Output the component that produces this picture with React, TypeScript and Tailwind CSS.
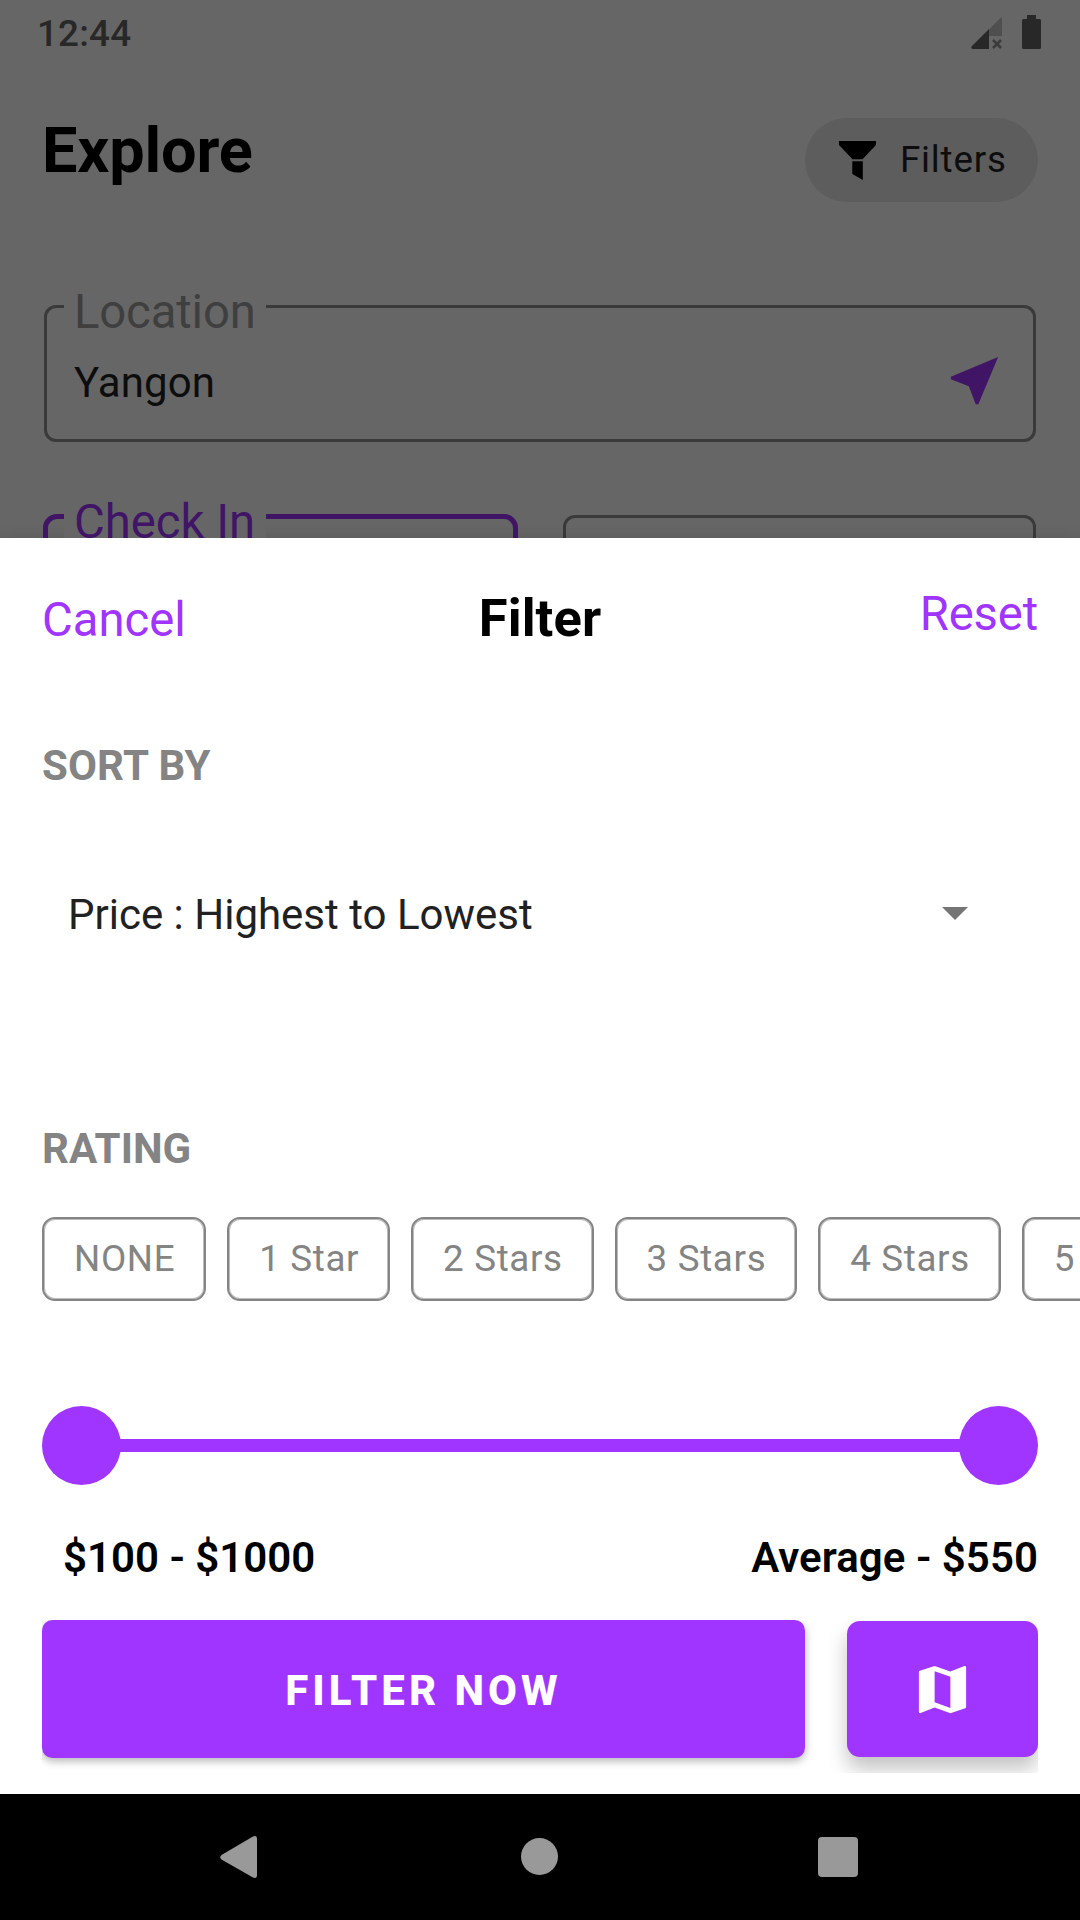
import React from "react";

const ratings = ["NONE", "1 Star", "2 Stars", "3 Stars", "4 Stars", "5 Stars"];

function StatusBar() {
  return (
    <div className="flex h-[67px] items-center justify-between pl-[37px] pr-[39px] text-[#282828]">
      <span className="mt-px text-[36.75px] font-medium leading-none tracking-[0.2px]">12:44</span>
      <div className="flex items-start gap-5">
        <svg className="mt-[-2px] h-[32px] w-[31px]" viewBox="0 0 31 32">
          <path d="M18 12.5 29 1.4Q31 0 31 2V19H18Z" fill="#4f4f4f" />
          <path d="M18 12v20H2Q-1 31.500 1 29Z" fill="#282828" />
          <path d="m22 23 8 8m0-8-8 8" stroke="#3c3c3c" strokeWidth="2.600" fill="none" />
        </svg>
        <svg className="mt-[-4px] h-[34px] w-[19px]" viewBox="0 0 19 34">
          <path d="M5 0h9v4h3.500Q19 4 19 5.500v27q0 1.500-1.500 1.500h-16Q0 34 0 32.500v-27Q0 4 1.500 4H5Z" fill="#282828" />
        </svg>
      </div>
    </div>
  );
}

function ExploreScreen() {
  return (
    <div className="h-[538px] shrink-0 overflow-hidden bg-[#666]">
      <StatusBar />
      <header className="flex h-[238px] items-start justify-between px-[42px] pt-[46px]">
        <h1 className="text-[63px] font-bold leading-[75px] tracking-[-0.15px] text-black">Explore</h1>
        <div className="mt-[5px] flex h-[84px] w-[233px] items-center rounded-full bg-[#5d5d5d] pl-[34px]">
          <svg className="h-[39px] w-[37px]" viewBox="0 0 37 39">
            <path d="M0 0h37v4L23.500 18.300h-10L0 4Z M13.300 20.300h10.500V39L13.300 33Z" fill="#000" />
          </svg>
          <span className="ml-6 text-[36.75px] leading-[44px] tracking-[0.8px] text-[#0d0d0d]">Filters</span>
        </div>
      </header>
      <div className="relative ml-[44px] flex h-[137px] w-[992px] items-start justify-between rounded-[12px] border-[3px] border-[#3a3a3a] pl-[27px] pr-[27px]">
        <span className="absolute left-[17px] top-[-24px] h-14 w-[202px] bg-[#666] pl-[10px] text-[47.25px] leading-[56px] tracking-[-0.15px] text-[#3f3f3f]">
          Location
        </span>
        <span className="mt-[50px] text-[42px] leading-[50px] tracking-[0.1px] text-[#0d0d0d]">Yangon</span>
        <svg className="mt-[41px] h-[63px] w-[63px]" viewBox="0 0 24 24">
          <path d="M21 3 3 10.530v.980l6.840 2.650L12.480 21h.980L21 3z" fill="#401566" />
        </svg>
      </div>
      <div className="mt-[72px] flex items-start gap-[45px] pl-[43px]">
        <div className="relative h-[140px] w-[475px] rounded-[14px] border-[5px] border-[#401566]">
          <span className="absolute left-[16px] top-[-25px] h-14 w-[202px] bg-[#666] pl-[10px] text-[47.25px] leading-[56px] text-[#401566]">
            Check In
          </span>
        </div>
        <div className="mt-px h-[137px] w-[473px] rounded-[12px] border-[3px] border-[#3a3a3a]" />
      </div>
    </div>
  );
}

function FilterSheet() {
  return (
    <div className="h-[1256px] shrink-0 overflow-hidden bg-white shadow-[0_0_14px_rgba(0,0,0,0.12)]">
      <div className="grid h-[203px] grid-cols-3 items-start px-[42px] text-[47.25px] leading-[60px] text-[#a035ff]">
        <span className="mt-[52px]">Cancel</span>
        <span className="mt-[50px] text-center text-[52.5px] font-bold tracking-[0.1px] text-black">Filter</span>
        <span className="mt-[46px] text-right tracking-[-0.15px]">Reset</span>
      </div>
      <h2 className="pl-[42px] text-[42px] font-bold leading-[50px] tracking-[0.15px] text-[#848484]">SORT BY</h2>
      <div className="mt-[99px] flex h-[50px] items-center justify-between pl-[68px] pr-[112.5px]">
        <span className="text-[42px] leading-[50px] text-[#212121]">Price : Highest to Lowest</span>
        <svg className="mt-[-3px] h-[13px] w-[26px]" viewBox="0 0 26 13">
          <path d="M0 0h26L13 13Z" fill="#757575" />
        </svg>
      </div>
      <h2 className="mt-[184px] pl-[42px] text-[42px] font-bold leading-[50px] text-[#848484]">RATING</h2>
      <div className="mt-[43px] flex gap-[21px] pl-[42px]">
        {ratings.map((label) => (
          <span
            key={label}
            className="h-[84px] shrink-0 whitespace-nowrap rounded-[13px] border-2 border-[#848484] pl-[30px] pr-[28.9px] text-[36.75px] leading-[80px] tracking-[0.66px] text-[#848484] shadow-[inset_0_0_0_1px_rgba(132,132,132,0.55)]"
          >
            {label}
          </span>
        ))}
      </div>
      <div className="mx-[42px] mt-[105px] flex h-[79px] items-center">
        <span className="size-[79px] shrink-0 rounded-full bg-[#a035ff]" />
        <span className="-mx-1 h-[13px] flex-1 bg-[#a035ff]" />
        <span className="size-[79px] shrink-0 rounded-full bg-[#a035ff]" />
      </div>
      <div className="mt-[48px] flex justify-between pl-[63px] pr-[42px] text-[42px] font-semibold leading-[50px] text-black">
        <span>$100 - $1000</span>
        <span className="tracking-[0.05px]">Average - $550</span>
      </div>
      <div className="mx-[42px] mt-[37px] flex h-[153px] items-start gap-[42px] overflow-hidden">
        <button className="h-[138px] w-[763px] rounded-[10.500px] bg-[#a035ff] pt-[3px] text-[42px] font-extrabold leading-[50px] tracking-[4px] text-white shadow-[0_3px_8px_rgba(0,0,0,0.3)]">
          FILTER NOW
        </button>
        <button className="mt-px flex h-[136px] w-[191px] items-center justify-center rounded-[13px] bg-[#a035ff] shadow-[0_12px_20px_rgba(0,0,0,0.24)]">
          <svg className="h-[63px] w-[63px]" viewBox="0 0 24 24">
            <path
              d="M20.500 3l-.160.030L15 5.100 9 3 3.360 4.900c-.210.070-.360.250-.360.480V20.500c0 .280.220.500.500.500l.160-.030L9 18.900l6 2.100 5.640-1.900c.210-.070.360-.250.360-.480V3.500c0-.280-.220-.500-.500-.500zM15 19l-6-2.110V5l6 2.110V19z"
              fill="#fff"
            />
          </svg>
        </button>
      </div>
    </div>
  );
}

function NavigationBar() {
  return (
    <div className="flex h-[126px] shrink-0 items-start bg-black pl-[220px] pt-[41px]">
      <svg className="h-[44px] w-[37px]" viewBox="0 0 37 44">
        <path d="M1.500 20 33 1.500Q37 0 37 4V40Q37 44 33 42.500L1.500 24.500Q-1 22.500 1.500 20Z" fill="#999" />
      </svg>
      <span className="ml-[264px] mt-[3px] size-[37px] rounded-full bg-[#999]" />
      <span className="ml-[260px] mt-[2px] size-[40px] rounded-[4px] bg-[#999]" />
    </div>
  );
}

export default function App() {
  return (
    <div className="flex h-[1920px] w-[1080px] flex-col overflow-hidden bg-white font-['Roboto',sans-serif]">
      <ExploreScreen />
      <FilterSheet />
      <NavigationBar />
    </div>
  );
}
